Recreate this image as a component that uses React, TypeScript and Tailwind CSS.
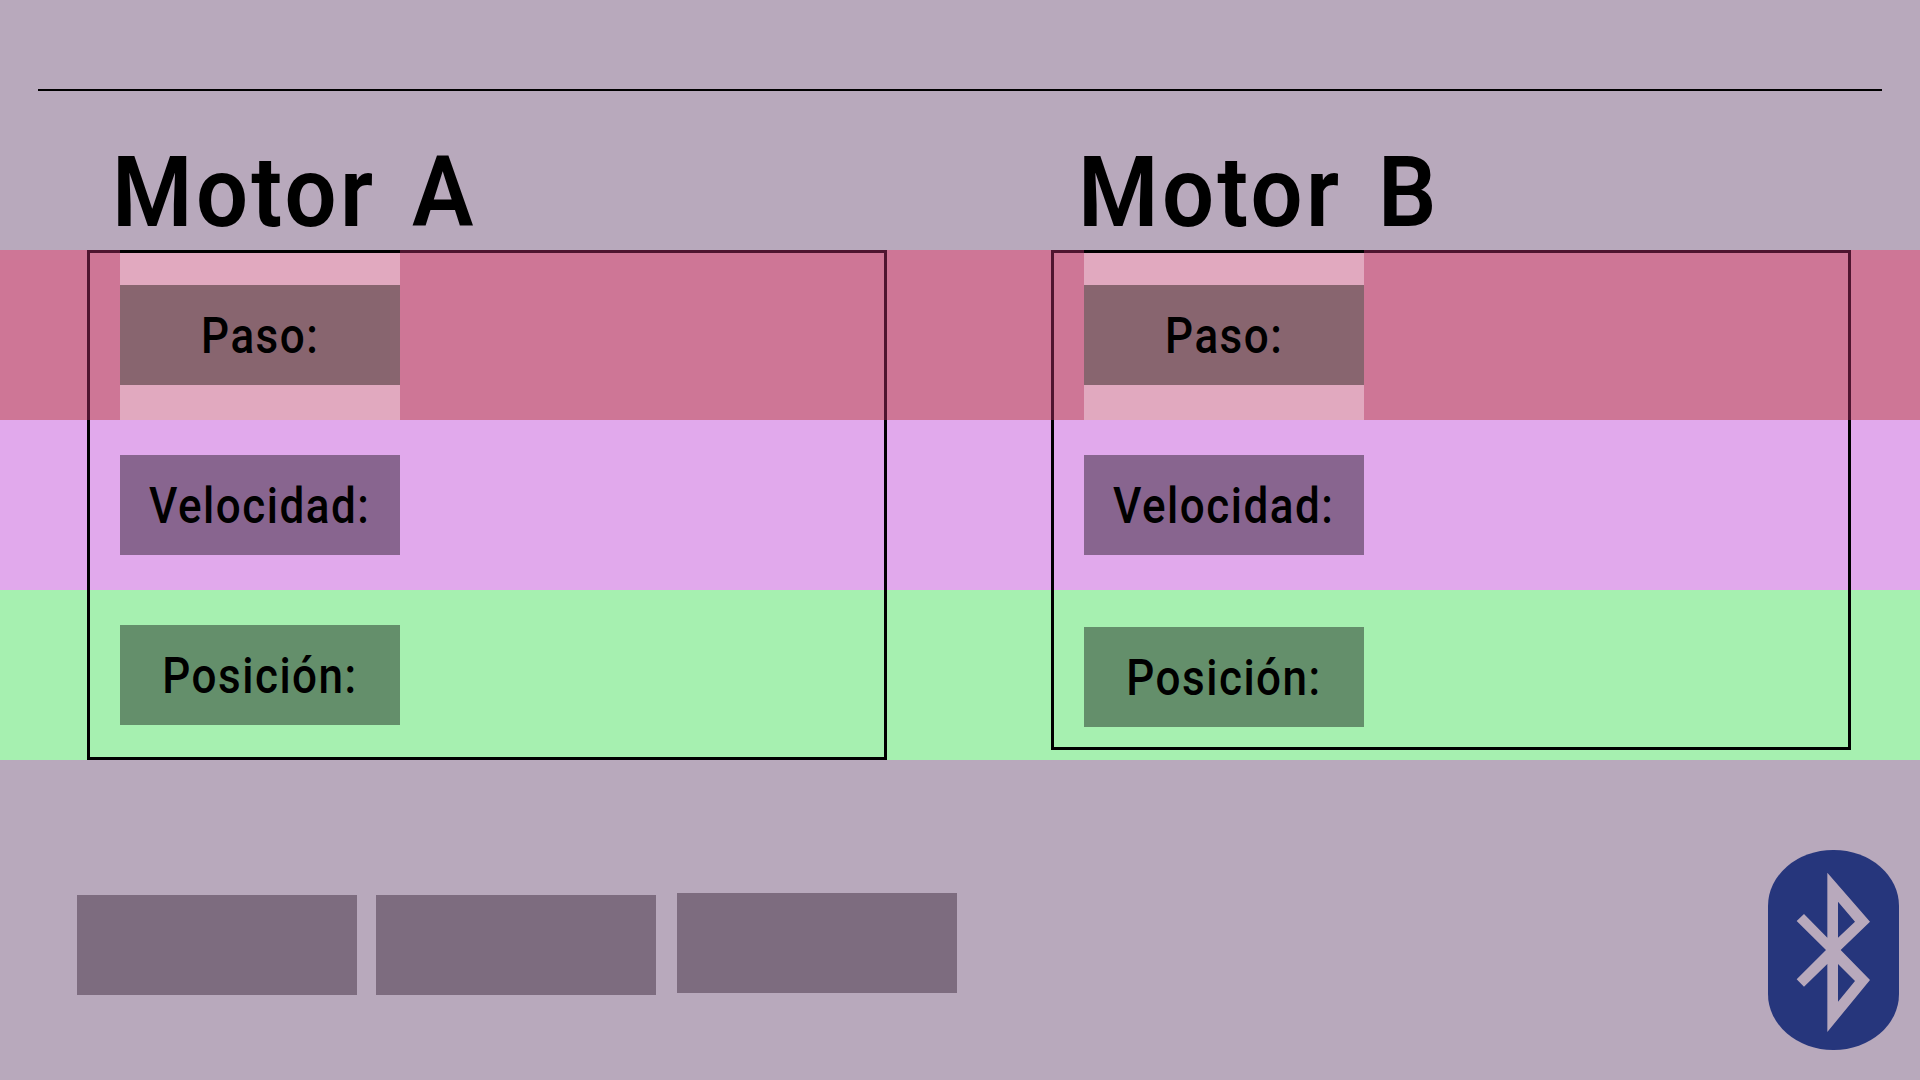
const Label = ({ text, tone }: { text: string; tone: string }) => (
    <div className={`flex h-[100px] w-[280px] items-center justify-center text-black ${tone}`}>
        <span className="mt-[2px] scale-x-[0.88] text-[50px] font-medium leading-none tracking-[1.7px]">{text}</span>
    </div>
);

const Title = ({ text, width }: { text: string; width: string }) => (
    <h1 className={`origin-left scale-x-[0.93] whitespace-nowrap text-[99px] font-semibold leading-[118px] tracking-[3.6px] text-black [word-spacing:10px] ${width}`}>
        {text}
    </h1>
);

const Frame = ({ left, height }: { left: string; height: string }) => (
    <div className={`absolute top-0 flex w-[800px] flex-col ${left} ${height}`}>
        <div className="relative h-[170px] border-x-[3px] border-t-[3px] border-[#4f1530]">
            <div className="absolute -top-[3px] left-[30px] h-[3px] w-[280px] bg-black" />
        </div>
        <div className="flex-grow border-x-[3px] border-b-[3px] border-black" />
    </div>
);

const BluetoothBadge = () => (
    <div className="mt-[90px] ml-auto mr-[21px] h-[200px] w-[131px] rounded-[65px/56px] bg-[#26367c]">
        <svg viewBox="144 90 393 600" className="h-full w-full">
            <path
                fill="#b8a9bc"
                fillRule="evenodd"
                d="M322 158 L450 305 L362 390 L450 480 L322 636 L322 432 L252 500 L230 478 L318 390 L230 303 L252 282 L322 353 Z M354 245 L354 353 L405 305 Z M354 432 L354 545 L405 483 Z"
            />
        </svg>
    </div>
);

const App = () => {
    return (
        <div className='flex h-[1080px] w-[1920px] flex-col overflow-hidden bg-[#b8a9bc] font-["Roboto",sans-serif]'>
            <header className="h-[250px] flex-none pt-[89px]">
                <div className="ml-[38px] h-[2px] w-[1844px] bg-black" />
                <div className="flex pl-[112px] pt-[42px]">
                    <Title text="Motor A" width="w-[966px]" />
                    <Title text="Motor B" width="w-[600px]" />
                </div>
            </header>

            <main className="relative flex-none">
                <div className="flex h-[170px] bg-[#ce7696] pl-[120px]">
                    <div className="flex h-full w-[280px] items-center bg-[#e1a9bf]">
                        <Label text="Paso:" tone="bg-[#88656f]" />
                    </div>
                    <div className="ml-[684px] flex h-full w-[280px] items-center bg-[#e1a9bf]">
                        <Label text="Paso:" tone="bg-[#88656f]" />
                    </div>
                </div>
                <div className="flex h-[170px] items-center gap-[684px] bg-[#e1a9ec] pl-[120px]">
                    <Label text="Velocidad:" tone="bg-[#88658f]" />
                    <Label text="Velocidad:" tone="bg-[#88658f]" />
                </div>
                <div className="flex h-[170px] items-start gap-[684px] bg-[#a6f0b0] pl-[120px] pt-[35px]">
                    <Label text="Posición:" tone="bg-[#648f6b]" />
                    <div className="mt-[2px]">
                        <Label text="Posición:" tone="bg-[#648f6b]" />
                    </div>
                </div>
                <Frame left="left-[87px]" height="h-[510px]" />
                <Frame left="left-[1051px]" height="h-[500px]" />
            </main>

            <footer className="flex flex-grow items-start pl-[77px]">
                <div className="mt-[135px] h-[100px] w-[280px] bg-[#7d6c7f]" />
                <div className="ml-[19px] mt-[135px] h-[100px] w-[280px] bg-[#7d6c7f]" />
                <div className="ml-[21px] mt-[133px] h-[100px] w-[280px] bg-[#7d6c7f]" />
                <BluetoothBadge />
            </footer>
        </div>
    );
};

export default App;
